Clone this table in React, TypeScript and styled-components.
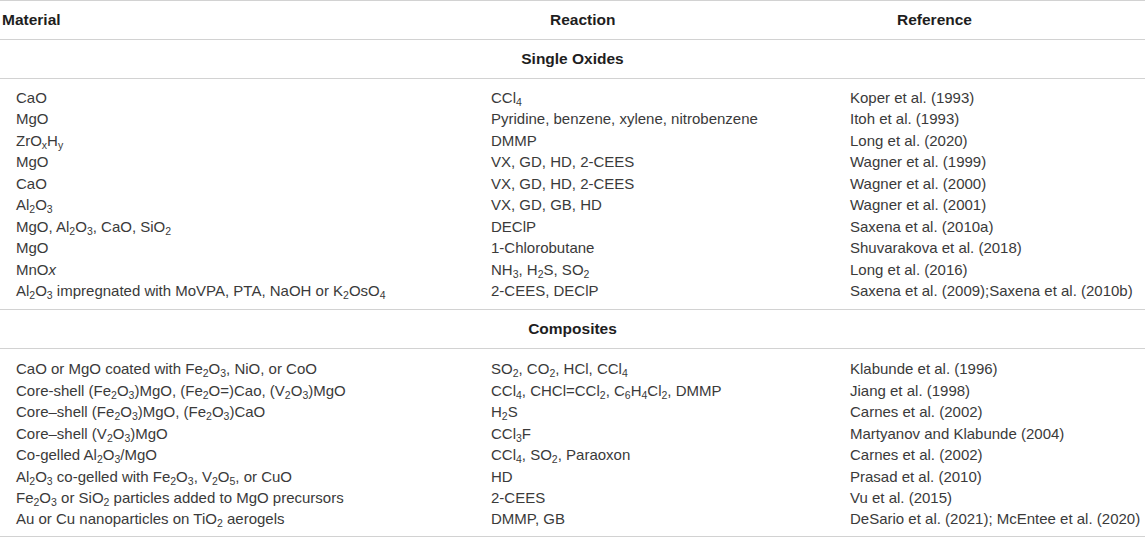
import React from "react";
import styled, { createGlobalStyle } from "styled-components";

const Global = createGlobalStyle`
  html, body { margin: 0; padding: 0; background: #ffffff; }
  body { font-family: "Liberation Sans", Arial, sans-serif; }
`;

const Table = styled.div`
  width: 1145px;
  display: grid;
  grid-template-columns: 475px 360px 1fr;
  border-top: 1px solid #d2d2d2;
  color: #3a3a3a;
  font-size: 15px;
`;

const HeaderCell = styled.div<{ $pad: number }>`
  height: 38px;
  display: flex;
  align-items: center;
  padding-left: ${(p) => p.$pad}px;
  font-weight: bold;
  font-size: 15.5px;
  color: #1e1e1e;
  border-bottom: 1px solid #d2d2d2;
`;

const Section = styled.div`
  grid-column: 1 / -1;
  height: 38px;
  display: flex;
  align-items: center;
  justify-content: center;
  font-weight: bold;
  font-size: 15.5px;
  color: #1e1e1e;
  border-bottom: 1px solid #d2d2d2;
`;

const Group = styled.div<{ $top: number; $bottom: number }>`
  grid-column: 1 / -1;
  display: grid;
  grid-template-columns: subgrid;
  padding-top: ${(p) => p.$top}px;
  padding-bottom: ${(p) => p.$bottom}px;
  border-bottom: 1px solid #d2d2d2;
`;

const Cell = styled.div<{ $pad: number }>`
  padding-left: ${(p) => p.$pad}px;
  height: 21.45px;
  line-height: 21.45px;
  white-space: nowrap;
`;

const Sub = styled.sub`
  font-size: 0.7em;
  vertical-align: -0.3em;
  line-height: 0;
`;

const Ital = styled.i`
  font-style: italic;
`;

function Chem({ text }: { text: string }) {
  const parts: React.ReactNode[] = [];
  const re = /\{([^}]*)\}|\[([^\]]*)\]|([^{[]+)/g;
  let m: RegExpExecArray | null;
  let k = 0;
  while ((m = re.exec(text))) {
    if (m[1] !== undefined) parts.push(<Sub key={k++}>{m[1]}</Sub>);
    else if (m[2] !== undefined) parts.push(<Ital key={k++}>{m[2]}</Ital>);
    else parts.push(<React.Fragment key={k++}>{m[3]}</React.Fragment>);
  }
  return <>{parts}</>;
}

type Row = [string, string, string];

const single: Row[] = [
  ["CaO", "CCl{4}", "Koper et al. (1993)"],
  ["MgO", "Pyridine, benzene, xylene, nitrobenzene", "Itoh et al. (1993)"],
  ["ZrO{x}H{y}", "DMMP", "Long et al. (2020)"],
  ["MgO", "VX, GD, HD, 2-CEES", "Wagner et al. (1999)"],
  ["CaO", "VX, GD, HD, 2-CEES", "Wagner et al. (2000)"],
  ["Al{2}O{3}", "VX, GD, GB, HD", "Wagner et al. (2001)"],
  ["MgO, Al{2}O{3}, CaO, SiO{2}", "DEClP", "Saxena et al. (2010a)"],
  ["MgO", "1-Chlorobutane", "Shuvarakova et al. (2018)"],
  ["MnO[x]", "NH{3}, H{2}S, SO{2}", "Long et al. (2016)"],
  [
    "Al{2}O{3} impregnated with MoVPA, PTA, NaOH or K{2}OsO{4}",
    "2-CEES, DEClP",
    "Saxena et al. (2009);Saxena et al. (2010b)",
  ],
];

const composites: Row[] = [
  ["CaO or MgO coated with Fe{2}O{3}, NiO, or CoO", "SO{2}, CO{2}, HCl, CCl{4}", "Klabunde et al. (1996)"],
  [
    "Core-shell (Fe{2}O{3})MgO, (Fe{2}O=)Cao, (V{2}O{3})MgO",
    "CCl{4}, CHCl=CCl{2}, C{6}H{4}Cl{2}, DMMP",
    "Jiang et al. (1998)",
  ],
  ["Core–shell (Fe{2}O{3})MgO, (Fe{2}O{3})CaO", "H{2}S", "Carnes et al. (2002)"],
  ["Core–shell (V{2}O{3})MgO", "CCl{3}F", "Martyanov and Klabunde (2004)"],
  ["Co-gelled Al{2}O{3}/MgO", "CCl{4}, SO{2}, Paraoxon", "Carnes et al. (2002)"],
  ["Al{2}O{3} co-gelled with Fe{2}O{3}, V{2}O{5}, or CuO", "HD", "Prasad et al. (2010)"],
  ["Fe{2}O{3} or SiO{2} particles added to MgO precursors", "2-CEES", "Vu et al. (2015)"],
  [
    "Au or Cu nanoparticles on TiO{2} aerogels",
    "DMMP, GB",
    "DeSario et al. (2021); McEntee et al. (2020)",
  ],
];

const pads = [16, 16, 15];

function Rows({ rows }: { rows: Row[] }) {
  return (
    <>
      {rows.map((r, i) =>
        r.map((c, j) => (
          <Cell key={`${i}-${j}`} $pad={pads[j]}>
            <Chem text={c} />
          </Cell>
        ))
      )}
    </>
  );
}

export default function App() {
  return (
    <>
      <Global />
      <Table>
        <HeaderCell $pad={2}>Material</HeaderCell>
        <HeaderCell $pad={75}>Reaction</HeaderCell>
        <HeaderCell $pad={62}>Reference</HeaderCell>
        <Section>Single Oxides</Section>
        <Group $top={8} $bottom={8}>
          <Rows rows={single} />
        </Group>
        <Section>Composites</Section>
        <Group $top={9} $bottom={6}>
          <Rows rows={composites} />
        </Group>
      </Table>
    </>
  );
}
